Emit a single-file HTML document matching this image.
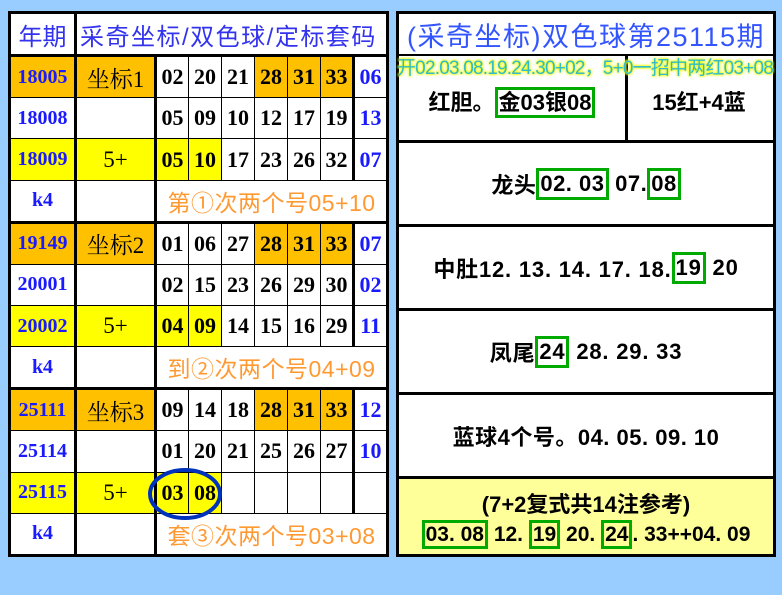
<!DOCTYPE html>
<html><head><meta charset="utf-8"><style>
body{margin:0;width:782px;height:595px;background:#99ccff;position:relative;overflow:hidden;font-family:"Liberation Serif","Noto Serif CJK SC",serif}
table{border-collapse:collapse;table-layout:fixed;position:absolute}
#L{left:8px;top:11px;width:378px;height:546px;border:3px solid #000}
#L td{border:1px solid #000;height:40px;padding:0;text-align:center;font-weight:bold;font-size:22px;background:#fff;overflow:hidden;white-space:nowrap}
#L td.y{color:#1a1aff;font-size:20px;border-right:3px solid #000}
#L td.l{font-weight:normal;font-size:23px;border-right:3px solid #000}
#L td.b{color:#1a1aff;border-left:3px solid #000}
#L td.o{background:#ffc000}
#L td.w{background:#ffff00}
#L td.t{color:#ff9a33;font-weight:normal;font-size:23px;letter-spacing:0.5px;font-family:"Liberation Sans","Noto Sans CJK SC",sans-serif}
#L tr.sep td{border-top:3px solid #000}
#L th{border:1px solid #000;border-bottom:2px solid #000;color:#3333ee;font-weight:normal;font-size:24px;height:40px;background:#fff;font-family:"Liberation Sans","Noto Sans CJK SC",sans-serif;white-space:nowrap;padding:0}
#R{position:absolute;left:396px;top:11px;width:374px;height:540px;border:3px solid #000;background:#fff;font-family:"Liberation Sans","Noto Sans CJK SC",sans-serif;font-weight:bold;color:#000}
.r{position:absolute;left:0;width:374px;display:flex;align-items:center;justify-content:center;font-size:22px;border-top:3px solid #000;box-sizing:border-box;white-space:nowrap}
.gb{border:3px solid #00aa00;padding:0 1px}
</style></head><body>
<table id="L">
<colgroup><col style="width:66px"><col style="width:80px"><col style="width:33px"><col style="width:33px"><col style="width:33px"><col style="width:33px"><col style="width:33px"><col style="width:33px"><col style="width:34px"></colgroup>
<tr><th style="border-right:3px solid #000">年期</th><th colspan="8" style="text-align:left;padding-left:3px;letter-spacing:1.5px">采奇坐标/双色球/定标套码</th></tr>
<tr class="sep"><td class="y o">18005</td><td class="l o">坐标1</td><td>02</td><td>20</td><td>21</td><td class="o">28</td><td class="o">31</td><td class="o">33</td><td class="b">06</td></tr>
<tr><td class="y">18008</td><td class="l"></td><td>05</td><td>09</td><td>10</td><td>12</td><td>17</td><td>19</td><td class="b">13</td></tr>
<tr><td class="y w">18009</td><td class="l w">5+</td><td class="w">05</td><td class="w">10</td><td>17</td><td>23</td><td>26</td><td>32</td><td class="b">07</td></tr>
<tr><td class="y">k4</td><td class="l"></td><td colspan="7" class="t">第①次两个号05+10</td></tr>
<tr class="sep"><td class="y o">19149</td><td class="l o">坐标2</td><td>01</td><td>06</td><td>27</td><td class="o">28</td><td class="o">31</td><td class="o">33</td><td class="b">07</td></tr>
<tr><td class="y">20001</td><td class="l"></td><td>02</td><td>15</td><td>23</td><td>26</td><td>29</td><td>30</td><td class="b">02</td></tr>
<tr><td class="y w">20002</td><td class="l w">5+</td><td class="w">04</td><td class="w">09</td><td>14</td><td>15</td><td>16</td><td>29</td><td class="b">11</td></tr>
<tr><td class="y">k4</td><td class="l"></td><td colspan="7" class="t">到②次两个号04+09</td></tr>
<tr class="sep"><td class="y o">25111</td><td class="l o">坐标3</td><td>09</td><td>14</td><td>18</td><td class="o">28</td><td class="o">31</td><td class="o">33</td><td class="b">12</td></tr>
<tr><td class="y">25114</td><td class="l"></td><td>01</td><td>20</td><td>21</td><td>25</td><td>26</td><td>27</td><td class="b">10</td></tr>
<tr><td class="y w">25115</td><td class="l w">5+</td><td class="w">03</td><td class="w">08</td><td></td><td></td><td></td><td></td><td class="b"></td></tr>
<tr><td class="y">k4</td><td class="l"></td><td colspan="7" class="t">套③次两个号03+08</td></tr>
</table>
<svg style="position:absolute;left:0;top:0" width="782" height="595"><ellipse cx="185" cy="494" rx="35" ry="24" fill="none" stroke="#0033bb" stroke-width="4"/></svg>
<div id="R">
<div class="r" style="top:0;height:40px;border-top:none;color:#3355ff;font-weight:normal;font-size:27px;letter-spacing:1.5px">(采奇坐标)双色球第25115期</div>
<div class="r" style="top:40px;height:86px;border-top:2px solid #000;justify-content:flex-start"><div style="width:226px;text-align:center;padding-top:6px">红胆。<span class="gb">金03银08</span></div><div style="position:absolute;left:226px;top:0;height:84px;border-left:3px solid #000;width:145px;display:flex;align-items:center;justify-content:center;padding-top:6px;box-sizing:border-box">15红+4蓝</div></div>
<div class="r" style="top:126px;height:84px;letter-spacing:0.5px">龙头<span class="gb">02. 03</span>&nbsp;07. <span class="gb">08</span></div>
<div class="r" style="top:210px;height:84px;letter-spacing:0.8px">中肚12. 13. 14. 17. 18. <span class="gb">19</span>&nbsp;20</div>
<div class="r" style="top:294px;height:84px;letter-spacing:0.8px">凤尾<span class="gb">24</span>&nbsp;28. 29. 33</div>
<div class="r" style="top:378px;height:84px;letter-spacing:0.5px">蓝球4个号。04. 05. 09. 10</div>
<div class="r" style="top:462px;height:78px;background:#ffff99;flex-direction:column"><div>(7+2复式共14注参考)</div><div style="margin-top:4px;font-size:21px"><span class="gb">03. 08</span> 12. <span class="gb">19</span> 20. <span class="gb">24</span>. 33++04. 09</div></div>
</div>
<div style="position:absolute;left:388px;top:53px;width:394px;text-align:center;font-family:'Liberation Sans','Noto Sans CJK SC',sans-serif;font-size:19px;color:#33bbcc;text-shadow:0 0 2px #eeff00,0 0 2px #eeff00,0 0 3px #eeff00;white-space:nowrap;letter-spacing:-0.8px">开02.03.08.19.24.30+02，5+0一招中两红03+08</div>
</body></html>
